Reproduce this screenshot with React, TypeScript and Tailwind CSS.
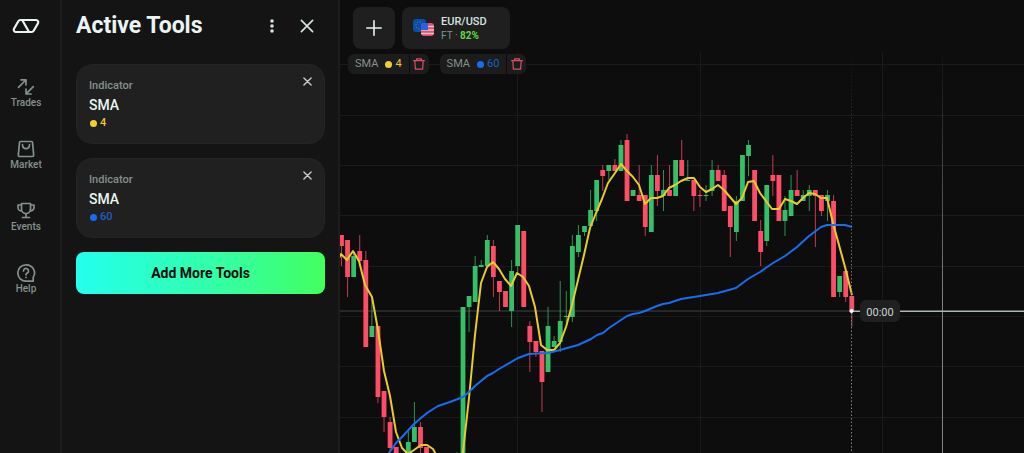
import type { ReactNode } from 'react';

type Candle = {
  open: number;
  close: number;
  high: number;
  low: number;
};

// every row is [open, close, high, low] on the vertical axis of the chart
const rows: number[][] = [
  [235, 246, 235, 266],
  [240, 277, 240, 297],
  [277, 256, 251, 277],
  [251, 261, 235, 266],
  [260, 347, 251, 347],
  [337, 326, 298, 337],
  [326, 397, 326, 403],
  [391, 417, 391, 432],
  [422, 448, 417, 452],
  [447, 462, 447, 470],
  [470, 458, 456, 470],
  [456, 442, 431, 460],
  [442, 427, 402, 442],
  [427, 448, 422, 460],
  [447, 464, 447, 470],
  [462, 470, 460, 480],
  [470, 480, 465, 485],
  [480, 470, 460, 485],
  [475, 465, 460, 480],
  [462, 456, 452, 470],
  [470, 307, 307, 480],
  [307, 296, 296, 332],
  [302, 266, 256, 302],
  [267, 265, 260, 267],
  [266, 240, 235, 266],
  [246, 277, 240, 297],
  [281, 292, 281, 311],
  [291, 307, 291, 307],
  [311, 271, 260, 327],
  [266, 225, 225, 272],
  [231, 307, 231, 307],
  [326, 342, 321, 372],
  [341, 352, 341, 357],
  [351, 382, 351, 412],
  [372, 326, 307, 372],
  [347, 341, 336, 347],
  [342, 321, 281, 352],
  [317, 316, 291, 323],
  [317, 246, 235, 322],
  [252, 235, 225, 257],
  [232, 226, 226, 236],
  [226, 210, 190, 226],
  [211, 180, 180, 221],
  [170, 176, 165, 191],
  [171, 165, 165, 180],
  [165, 171, 159, 171],
  [171, 145, 140, 171],
  [140, 201, 134, 201],
  [196, 190, 190, 196],
  [195, 201, 165, 201],
  [195, 227, 195, 236],
  [232, 175, 165, 232],
  [175, 191, 155, 206],
  [196, 190, 170, 211],
  [190, 196, 165, 196],
  [196, 160, 160, 196],
  [160, 176, 140, 176],
  [181, 180, 160, 181],
  [180, 196, 180, 211],
  [195, 196, 190, 207],
  [196, 195, 185, 201],
  [191, 170, 160, 196],
  [170, 181, 165, 181],
  [175, 211, 170, 211],
  [206, 227, 206, 257],
  [232, 201, 196, 241],
  [201, 155, 155, 201],
  [156, 145, 140, 176],
  [170, 221, 170, 221],
  [231, 252, 220, 266],
  [241, 185, 185, 246],
  [175, 181, 155, 196],
  [175, 221, 175, 221],
  [221, 210, 196, 236],
  [216, 190, 175, 216],
  [190, 196, 170, 196],
  [201, 195, 190, 201],
  [196, 190, 185, 211],
  [190, 196, 190, 247],
  [195, 211, 195, 216],
  [201, 195, 190, 221],
  [201, 297, 195, 297],
  [292, 276, 276, 297],
  [271, 297, 271, 302],
  [296, 312, 296, 327],
];

const candles: Candle[] = rows.map(([open, close, high, low]) => ({ open, close, high, low }));

const smaFast =
  '339,258 341,254 347,260 353,251 359,261 365,285 372,297 378,330 384,371 390,396 396,432 402,448 408,454 414,450 421,445 427,445 433,449 439,460 451,475 463,452 469,398 475,335 481,283 487,267 493,262 499,269 505,279 511,286 517,273 523,277 529,286 535,307 541,345 547,350 554,350 560,343 566,327 572,305 578,280 584,255 590,228 596,213 602,199 608,183 615,173 621,164 627,171 633,177 639,185 645,204 651,198 657,198 663,196 669,188 675,185 681,181 688,178 694,178 700,187 706,192 712,189 718,185 724,190 730,197 736,204 742,198 748,182 754,181 760,193 766,201 772,209 779,209 785,199 791,201 797,204 803,198 809,193 815,194 821,198 827,198 833,223 839,245 845,267 852,295';

const smaSlow =
  '380,464 389,453 396,443 402,437 414,424 421,418 427,413 438,406 450,402 463,397 469,392 475,386 487,376 493,373 499,369 518,358 529,354 548,353 560,350 578,345 591,339 597,335 603,333 609,328 621,320 627,316 633,314 639,313 645,311 657,306 663,304 669,303 681,299 700,296 718,293 736,288 748,279 760,272 773,263 785,256 797,247 809,236 821,227 827,225 845,225 852,227';

const indicators = [
  { id: 'sma-4', name: 'SMA', period: 4, text: 'text-[#e9c92b]', dot: 'bg-[#f0d02c]' },
  { id: 'sma-60', name: 'SMA', period: 60, text: 'text-[#1c5fc9]', dot: 'bg-[#176df2]' },
];

function Icon({ size = 20, stroke = 1.7, children }: { size?: number; stroke?: number; children: ReactNode }) {
  return (
    <svg
      width={size}
      height={size}
      viewBox="0 0 20 20"
      fill="none"
      stroke="currentColor"
      strokeWidth={stroke}
      strokeLinecap="round"
      strokeLinejoin="round"
      aria-hidden="true"
    >
      {children}
    </svg>
  );
}

const CloseIcon = ({ size, stroke }: { size: number; stroke: number }) => (
  <Icon size={size} stroke={stroke}>
    <path d="M2 2 18 18M18 2 2 18" />
  </Icon>
);

const TrashIcon = () => (
  <Icon size={12} stroke={2}>
    <path d="M1 4.5h18M6 4.5V1.5h8v3M3 4.5l1 14h12l1-14" />
  </Icon>
);

const links = [
  {
    label: 'Trades',
    icon: <path d="M2.5 10.3 9.8 3M5 2.8h5v5M17.3 9.7l-7 7M10 12v5h5" />,
  },
  {
    label: 'Market',
    icon: (
      <path d="M4.5 2.5h11a1 1 0 0 1 1 1l1.2 12.500a1.5 1.5 0 0 1-1.5 1.5H3.8a1.5 1.5 0 0 1-1.5-1.5L3.5 3.5a1 1 0 0 1 1-1ZM6.500 5.5c0 5.500 7 5.500 7 0" />
    ),
  },
  {
    label: 'Events',
    icon: (
      <path d="M5.500 2.5h9v5.500a4.500 4.500 0 0 1-9 0ZM5.500 4H2v2.500A3.500 3.500 0 0 0 5.500 10M14.500 4H18v2.500a3.500 3.500 0 0 1-3.500 3.500M10 12.500v4M6.500 16.500h7" />
    ),
  },
  {
    label: 'Help',
    icon: (
      <>
        <path d="M10 1.8a8.2 8.2 0 1 0 0 16.400h7.200v-3.800A8.200 8.200 0 0 0 10 1.8Z" />
        <path d="M7.500 8a2.500 2.500 0 1 1 3.800 2.100c-.9.500-1.300.900-1.300 1.700M10 14.300v.1" />
      </>
    ),
  },
];

function Sidebar() {
  return (
    <nav className="flex w-[62px] shrink-0 flex-col items-center border-r-2 border-[#1c1c1c] pr-2 pt-[18px]">
      <a href="#home" aria-label="Home" className="text-[#e9f5f2]">
        <svg width="28" height="16" viewBox="0 0 28 16" fill="none" stroke="currentColor" strokeWidth="2.2" strokeLinejoin="round" aria-hidden="true">
          <path d="M8.5 2H24a2.200 2.200 0 0 1 2 3.200l-4.300 7.600A2.400 2.400 0 0 1 19.500 14H4a2.200 2.200 0 0 1-2-3.200l4.300-7.600A2.400 2.400 0 0 1 8.500 2ZM10.500 2.500 17 14" />
        </svg>
      </a>
      <ul className="mt-[43px] flex flex-col gap-[30px]">
        {links.map((link) => (
          <li key={link.label}>
            <a href={`#${link.label.toLowerCase()}`} className="flex flex-col items-center text-[10px] leading-3 font-medium text-[#84918e]">
              <Icon>{link.icon}</Icon>
              <span>{link.label}</span>
            </a>
          </li>
        ))}
      </ul>
    </nav>
  );
}

function ToolsPanel() {
  return (
    <aside className="w-[276px] shrink-0 pl-[14px] pr-[13px] pt-2">
      <header className="flex h-9 items-center">
        <h1 className="grow text-[23px] font-bold text-[#e9f5f2]">Active Tools</h1>
        <button type="button" aria-label="More options" className="flex w-5 justify-center text-[#d5e3e0]">
          <svg width="4" height="14" viewBox="0 0 4 14" fill="currentColor" aria-hidden="true">
            <circle cx="2" cy="2" r="1.800" />
            <circle cx="2" cy="7" r="1.800" />
            <circle cx="2" cy="12" r="1.800" />
          </svg>
        </button>
        <button type="button" aria-label="Close panel" className="ml-[15px] mr-2 flex w-5 justify-center text-[#d5e3e0]">
          <CloseIcon size={14} stroke={2.4} />
        </button>
      </header>
      <div className="mt-5 flex flex-col gap-[14px]">
        {indicators.map((item) => (
          <article key={item.id} className="flex h-20 items-start justify-between rounded-2xl border border-[#242424] bg-[#202020] pl-3 pr-3 pt-3">
            <div>
              <p className="text-[11px] leading-[18px] font-medium text-[#84918e]">Indicator</p>
              <h2 className="text-[14px] leading-5 font-medium text-[#e9f5f2]">{item.name}</h2>
              <p className={`flex items-center gap-[3px] text-[11px] leading-4 font-medium ${item.text}`}>
                <span className={`ml-px size-[7px] rounded-full ${item.dot}`} />
                {item.period}
              </p>
            </div>
            <button type="button" aria-label={`Remove ${item.name} ${item.period}`} className="text-[#c3cfcc]">
              <CloseIcon size={9} stroke={3} />
            </button>
          </article>
        ))}
        <button type="button" className="h-[42px] rounded-lg bg-linear-to-r from-[#24ffee] to-[#42ff5c] text-sm font-bold text-[#0d0d0d]">
          Add More Tools
        </button>
      </div>
    </aside>
  );
}

function PriceChart() {
  return (
    <svg className="absolute inset-0 size-full" viewBox="340 0 684 453" preserveAspectRatio="xMinYMin slice" role="img" aria-label="EUR/USD price chart">
      <defs>
        <linearGradient id="expiry" gradientUnits="userSpaceOnUse" x1="0" y1="50" x2="0" y2="300">
          <stop offset="0" stopColor="#7c8583" stopOpacity="0" />
          <stop offset="1" stopColor="#7c8583" />
        </linearGradient>
      </defs>
      <g fill="#1a1a1a">
        {[64, 115, 165, 215, 266, 316, 366, 417].map((y) => (
          <rect key={y} x="340" y={y} width="684" height="1" />
        ))}
        {[517, 700, 882].map((x) => (
          <rect key={x} x={x} y="52" width="1" height="401" />
        ))}
      </g>
      <rect x="340" y="310" width="512" height="2" fill="#262727" />
      <rect x="942" y="50" width="1" height="403" fill="url(#expiry)" />
      {candles.map((candle, index) => {
        const x = 341.5 + index * 6.075;
        const up = candle.close < candle.open;
        return (
          <g key={index} fill={up ? '#35bf68' : '#ff4d67'}>
            <rect x={x - 0.5} y={candle.high} width="1" height={candle.low - candle.high} opacity="0.75" />
            <rect x={x - 2.4} y={Math.min(candle.open, candle.close)} width="4.8" height={Math.abs(candle.open - candle.close)} />
          </g>
        );
      })}
      <g fill="none" strokeWidth="2" strokeLinejoin="round">
        <polyline points={smaFast} stroke="#e8cb2c" />
        <polyline points={smaSlow} stroke="#176df2" />
      </g>
      <path d="M851.5 54V453" stroke="url(#expiry)" strokeDasharray="1.5 2" />
      <rect x="852" y="310.500" width="172" height="1.500" fill="#aab7b4" />
      <circle cx="851.5" cy="311" r="2" fill="#ffffff" />
      <rect x="860" y="300" width="40" height="22" rx="6" fill="#202020" />
      <text x="880" y="316" textAnchor="middle" fontSize="11" fill="#c9d5d2">
        00:00
      </text>
    </svg>
  );
}

const PairFlags = () => (
  <svg width="22" height="20" viewBox="0 0 22 20" aria-hidden="true">
    <rect x="0" y="1" width="13" height="13" rx="3" fill="#0b4ea8" />
    <circle cx="6.5" cy="7.5" r="3.6" fill="none" stroke="#7d9570" strokeWidth="1" strokeDasharray="1 1.83" />
    <clipPath id="usd">
      <rect x="8" y="5" width="13" height="13" rx="3" />
    </clipPath>
    <g clipPath="url(#usd)">
      <rect x="8" y="5" width="13" height="13" fill="#dd526a" />
      <path d="M8 8.5h13M8 12h13M8 15.5h13" stroke="#e3c4cc" strokeWidth="1.3" />
      <rect x="8" y="5" width="7" height="7" fill="#2f5fe0" />
    </g>
  </svg>
);

function Trading() {
  return (
    <main className="relative min-w-0 grow overflow-hidden border-l-2 border-[#1c1c1c] bg-[#0d0d0d]">
      <PriceChart />
      <div className="relative pl-2 pt-[7px]">
        <div className="flex gap-[7px] pl-[5px]">
          <button type="button" aria-label="Add asset" className="flex size-[42px] items-center justify-center rounded-lg bg-[#1f1f1f] text-[#e9f5f2]">
            <Icon size={16} stroke={2}>
              <path d="M10 1v18M1 10h18" />
            </Icon>
          </button>
          <button type="button" className="flex h-[42px] w-[108px] items-center rounded-lg bg-[#1f1f1f] pl-[11px] text-left">
            <PairFlags />
            <span className="ml-[6px]">
              <span className="block text-[11px] leading-[14px] font-medium text-[#d5e3e0]">EUR/USD</span>
              <span className="block text-[10px] leading-[13px] text-[#84918e]">
                FT · <b className="text-[#5fd845]">82%</b>
              </span>
            </span>
          </button>
        </div>
        <div className="mt-[5px] flex gap-[11px]">
          {indicators.map((item) => (
            <div key={item.id} className="flex h-5 overflow-hidden rounded-md bg-[#1c1c1c] text-[11px]">
              <span className="flex items-center px-[7px] text-[#84918e]">
                {item.name}
                <span className={`ml-[7px] mr-[3px] size-[7px] rounded-full ${item.dot}`} />
                <span className={item.text}>{item.period}</span>
              </span>
              <button type="button" aria-label={`Delete ${item.name} ${item.period}`} className="flex w-5 items-center justify-center border-l border-[#0d0d0d] text-[#d84f66]">
                <TrashIcon />
              </button>
            </div>
          ))}
        </div>
      </div>
    </main>
  );
}

export default function App() {
  return (
    <div className="flex h-screen overflow-hidden bg-[#141414] font-['Roboto',sans-serif]">
      <Sidebar />
      <ToolsPanel />
      <Trading />
    </div>
  );
}
